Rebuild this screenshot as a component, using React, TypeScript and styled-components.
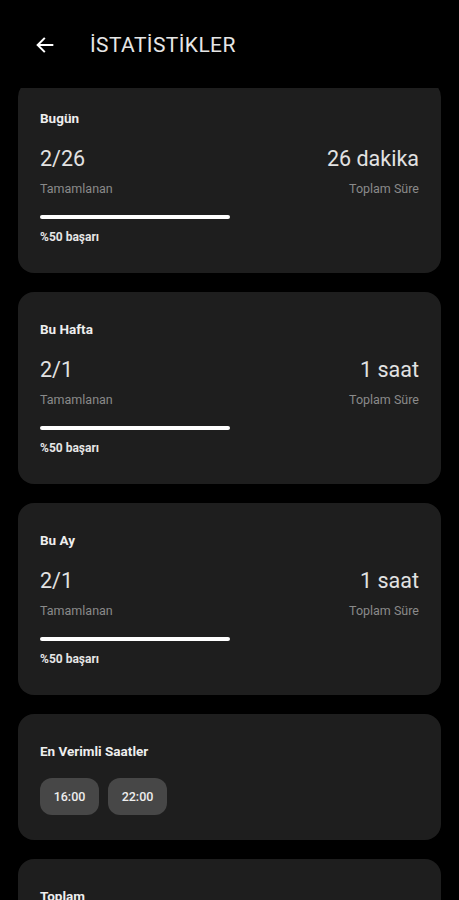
import styled, { createGlobalStyle } from "styled-components";

const GlobalStyle = createGlobalStyle`
  html, body {
    margin: 0;
    padding: 0;
    background: #000;
  }
  body {
    font-family: Roboto, "Noto Sans", sans-serif;
    -webkit-font-smoothing: antialiased;
  }
`;

type Period = {
  title: string;
  done: string;
  duration: string;
  percent: number;
};

const periods: Period[] = [
  { title: "Bugün", done: "2/26", duration: "26 dakika", percent: 50 },
  { title: "Bu Hafta", done: "2/1", duration: "1 saat", percent: 50 },
  { title: "Bu Ay", done: "2/1", duration: "1 saat", percent: 50 },
];

const hours = ["16:00", "22:00"];

const BackArrow = () => (
  <svg width="22" height="22" viewBox="0 0 24 24" fill="none">
    <path
      d="M20 12H4.5M11 5l-7 7 7 7"
      stroke="#fff"
      strokeWidth="2.2"
      strokeLinecap="square"
    />
  </svg>
);

const StatCard = ({ period }: { period: Period }) => (
  <Card>
    <CardTitle>{period.title}</CardTitle>
    <StatsRow>
      <StatColumn>
        <StatValue>{period.done}</StatValue>
        <StatLabel>Tamamlanan</StatLabel>
      </StatColumn>
      <StatColumn $alignRight>
        <StatValue>{period.duration}</StatValue>
        <StatLabel>Toplam Süre</StatLabel>
      </StatColumn>
    </StatsRow>
    <ProgressTrack>
      <ProgressFill style={{ width: `${period.percent}%` }} />
    </ProgressTrack>
    <SuccessText>%{period.percent} başarı</SuccessText>
  </Card>
);

const App = () => {
  return (
    <>
      <GlobalStyle />
      <Screen>
        <Header>
          <BackButton>
            <BackArrow />
          </BackButton>
          <HeaderTitle>İSTATİSTİKLER</HeaderTitle>
        </Header>
        <ScrollArea>
          <CardList>
            {periods.map((p) => (
              <StatCard key={p.title} period={p} />
            ))}
            <Card $compact>
              <CardTitle>En Verimli Saatler</CardTitle>
              <ChipRow>
                {hours.map((h) => (
                  <Chip key={h}>{h}</Chip>
                ))}
              </ChipRow>
            </Card>
            <Card>
              <CardTitle>Toplam</CardTitle>
              <StatsRow>
                <StatColumn>
                  <StatValue>4</StatValue>
                  <StatLabel>Tamamlanan</StatLabel>
                </StatColumn>
              </StatsRow>
            </Card>
          </CardList>
        </ScrollArea>
      </Screen>
    </>
  );
};

export default App;

const Screen = styled.div`
  width: 459px;
  height: 900px;
  display: flex;
  flex-direction: column;
  background: #000;
  overflow: hidden;
`;

const Header = styled.div`
  height: 88px;
  flex-shrink: 0;
  display: flex;
  align-items: center;
  padding: 2px 0 0 34px;
  box-sizing: border-box;
  gap: 34px;
`;

const BackButton = styled.div`
  width: 22px;
  height: 22px;
  display: flex;
  align-items: center;
  justify-content: center;
`;

const HeaderTitle = styled.h1`
  margin: 0;
  font-size: 21px;
  font-weight: 400;
  letter-spacing: 0.4px;
  color: #e6e6e6;
`;

const ScrollArea = styled.div`
  flex: 1;
  overflow: hidden;
`;

const CardList = styled.div`
  margin-top: -7px;
  padding: 0 18px;
  display: flex;
  flex-direction: column;
  gap: 19px;
`;

const Card = styled.div<{ $compact?: boolean }>`
  background: #1e1e1e;
  border-radius: 16px;
  padding: ${({ $compact }) => ($compact ? "29px 22px 25px" : "29px 22px 29px")};
  display: flex;
  flex-direction: column;
`;

const CardTitle = styled.div`
  height: 16px;
  font-size: 13.5px;
  line-height: 16px;
  font-weight: 700;
  color: #eeeeee;
`;

const StatsRow = styled.div`
  margin-top: 21px;
  display: flex;
  justify-content: space-between;
`;

const StatColumn = styled.div<{ $alignRight?: boolean }>`
  display: flex;
  flex-direction: column;
  gap: 11px;
  align-items: ${({ $alignRight }) => ($alignRight ? "flex-end" : "flex-start")};
`;

const StatValue = styled.div`
  height: 24px;
  font-size: 21.5px;
  line-height: 24px;
  font-weight: 400;
  color: #e2e2e2;
`;

const StatLabel = styled.div`
  height: 14px;
  font-size: 12.5px;
  line-height: 14px;
  color: #8a8a8a;
`;

const ProgressTrack = styled.div`
  margin-top: 19px;
  height: 4px;
  border-radius: 2px;
  background: transparent;
`;

const ProgressFill = styled.div`
  height: 100%;
  border-radius: 2px;
  background: #ffffff;
`;

const SuccessText = styled.div`
  height: 14px;
  margin-top: 11px;
  font-size: 12px;
  line-height: 14px;
  font-weight: 700;
  color: #e6e6e6;
`;

const ChipRow = styled.div`
  margin-top: 19px;
  display: flex;
  gap: 9px;
`;

const Chip = styled.div`
  width: 59px;
  height: 37px;
  border-radius: 12px;
  background: #474747;
  display: flex;
  align-items: center;
  justify-content: center;
  font-size: 12.5px;
  font-weight: 500;
  color: #eeeeee;
`;
